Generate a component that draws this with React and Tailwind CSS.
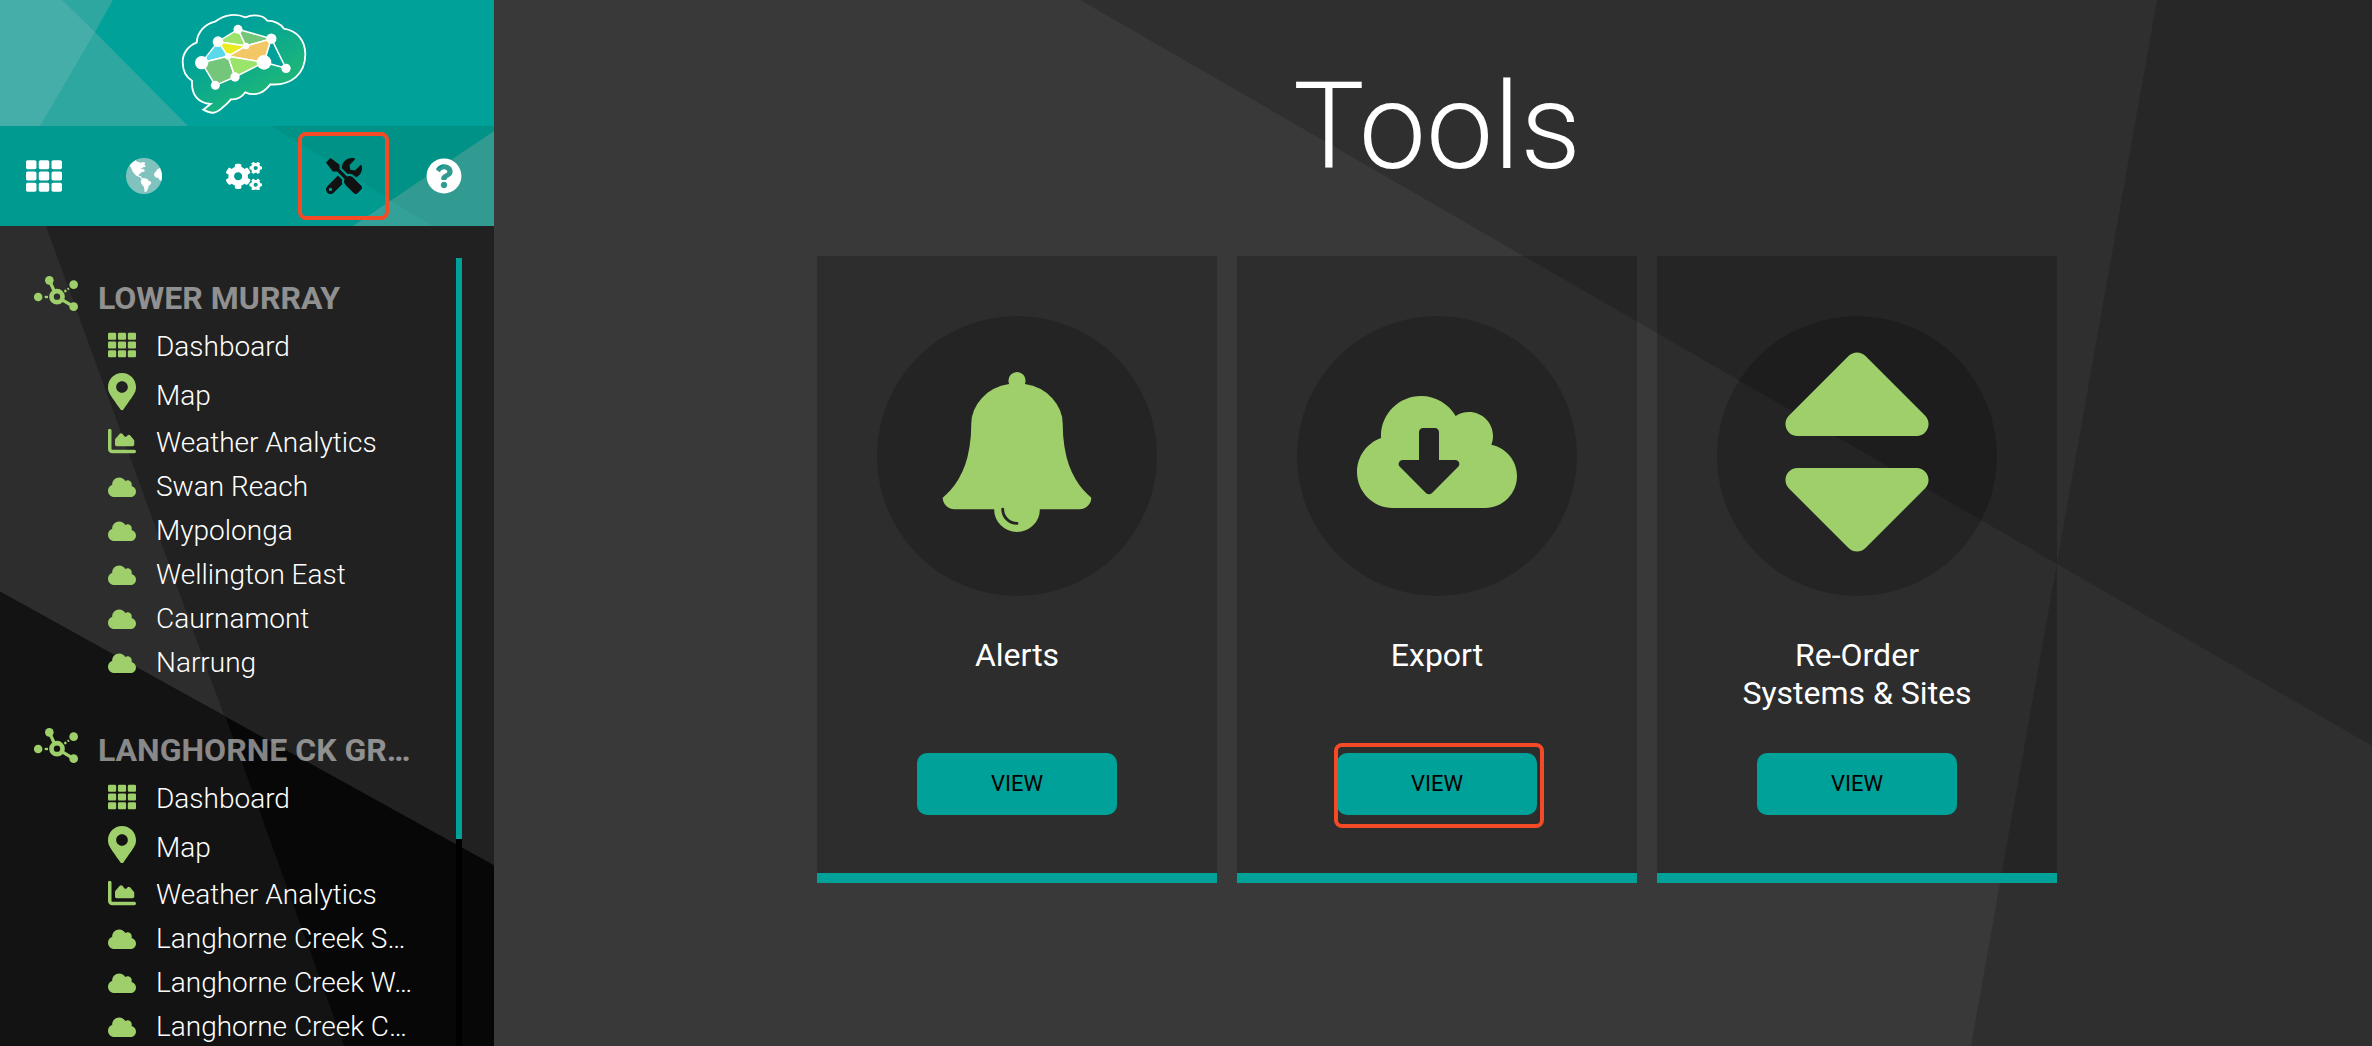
import React from "react";
import {
  FaTh,
  FaCogs,
  FaTools,
  FaQuestionCircle,
  FaMapMarkerAlt,
  FaCloud,
  FaCloudDownloadAlt,
  FaSort,
} from "react-icons/fa";
import { FaChartArea } from "react-icons/fa6";

function BrainLogo() {
  return (
    <svg viewBox="90 30 385 320" className="h-[106.67px] w-[128.33px]">
      <defs>
        <linearGradient id="brain" x1="0.2" y1="0.15" x2="0.7" y2="0.75">
          <stop offset="0.2" stopColor="#00a199" />
          <stop offset="1" stopColor="#1bb57b" />
        </linearGradient>
      </defs>
      <path
        d="M140 128C115 137 98 160 98 185C98 212 110 232 126 242C124 284 142 308 182 312L160 329C185 342 195 342 215 325C225 317 235 308 243 298C262 300 275 292 286 277C315 290 342 278 361 253C425 258 466 220 466 163C466 120 440 92 402 86C393 72 372 62 352 62C340 45 310 42 286 52C260 40 225 42 197 64C165 72 142 95 140 128Z"
        fill="url(#brain)"
        stroke="#fff"
        strokeWidth="5.5"
      />
      <g stroke="#fff" strokeWidth="4.5" strokeLinejoin="round">
        <path d="M264 88L204 125L288 138Z" fill="#9be36a" />
        <path d="M264 88L288 138L364 116Z" fill="#73c67a" />
        <path d="M204 125L288 138L234 169Z" fill="#e8ec20" />
        <path d="M204 125L155 188L234 169Z" fill="#5ad9ec" />
        <path d="M234 169L288 138L364 116L342 187Z" fill="#f4c766" />
        <path d="M155 188L234 169L255 231L196 256Z" fill="#73c67a" />
        <path d="M234 169L255 231L342 187Z" fill="#9be36a" />
        <path d="M364 116L342 187L408 205Z" fill="#00a199" />
      </g>
      <g fill="#fff">
        <circle cx="264" cy="88" r="13.5" />
        <circle cx="204" cy="125" r="16" />
        <circle cx="155" cy="188" r="20" />
        <circle cx="234" cy="169" r="10" />
        <circle cx="288" cy="138" r="10" />
        <circle cx="364" cy="116" r="15.5" />
        <circle cx="342" cy="187" r="22" />
        <circle cx="408" cy="205" r="14" />
        <circle cx="255" cy="231" r="14" />
        <circle cx="196" cy="256" r="13.5" />
      </g>
    </svg>
  );
}

function NetworkIcon() {
  return (
    <svg viewBox="0 0 132 105" className="mb-[9px] h-[35px] w-11 shrink-0 text-[#9fcf6a]">
      <g stroke="currentColor" strokeWidth="10" fill="none">
        <path d="M46 13L62 48" />
        <path d="M82 70L119 92" />
        <path d="M32 63H42" strokeWidth="7" />
        <path d="M91 47L97 43M101 40L105 37" strokeWidth="7" />
        <circle cx="69" cy="62" r="16.5" strokeWidth="14" />
      </g>
      <g fill="currentColor">
        <circle cx="12.5" cy="63" r="12.8" />
        <circle cx="46" cy="13" r="13" />
        <circle cx="119" cy="26" r="13" />
        <circle cx="119" cy="92" r="13" />
      </g>
    </svg>
  );
}

function GlobeIcon() {
  return (
    <svg viewBox="12 13 108 108" className="size-9">
      <circle cx="66" cy="67" r="54" fill="#80c3be" />
      <path
        d="M23 35C28 29 34 24 41 20L46 25L51 24L55 28L62 25L70 27L67 33L71 37L70 40L64 41L59 43L56 46L62 45L68 49L67 54L60 55L56 58L52 62L49 66L56 67L60 73L68 74L76 76L80 81L87 84L87 90L80 97L78 105L73 114L68 115L66 100L59 92L56 84L59 76L54 71L43 66L37 60L31 52L28 44Z"
        fill="#fff"
      />
      <path d="M114 43L106 47L101 54L96 60L97 67L103 72L110 73L112 79L118 82A54 54 0 0 0 114 43Z" fill="#fff" />
    </svg>
  );
}

function BellIcon() {
  return (
    <svg viewBox="0 0 1792 1792" className="size-40" fill="currentColor">
      <path d="M912 1696q0-16-16-16-59 0-101.500-42.500t-42.500-101.500q0-16-16-16t-16 16q0 73 51.500 124.500t124.500 51.500q16 0 16-16zm816-288q0 52-38 90t-90 38h-448q0 106-75 181t-181 75-181-75-75-181h-448q-52 0-90-38t-38-90q50-42 91-88t85-119.500 74.500-158.500 50-206 19.500-260q0-152 117-282.500t307-158.500q-8-19-8-39 0-40 28-68t68-28 68 28 28 68q0 20-8 39 190 28 307 158.500t117 282.500q0 139 19.500 260t50 206 74.500 158.500 85 119.500 91 88z" />
    </svg>
  );
}

const common = [
  { label: "Dashboard", row: "h-12", icon: <FaTh className="mb-1 size-7" /> },
  { label: "Map", row: "h-[50px]", icon: <FaMapMarkerAlt className="mb-2 h-[37.33px] w-7" /> },
  { label: "Weather Analytics", row: "h-11", icon: <FaChartArea className="mb-1 size-7" /> },
];

const groups = [
  {
    name: "LOWER MURRAY",
    sites: ["Swan Reach", "Mypolonga", "Wellington East", "Caurnamont", "Narrung"],
  },
  {
    name: "LANGHORNE CK GR…",
    sites: ["Langhorne Creek S…", "Langhorne Creek W…", "Langhorne Creek C…"],
  },
];

function Item({ label, row, icon }) {
  return (
    <li className={`flex items-center gap-5 pl-[108px] ${row}`}>
      <span className="text-[#9fcf6a]">{icon}</span>
      <span className="text-[28px] leading-[34px] font-light whitespace-nowrap text-white">{label}</span>
    </li>
  );
}

function Group({ name, sites }) {
  return (
    <section>
      <div className="flex h-[50px] items-center gap-5 pl-[34px]">
        <NetworkIcon />
        <h2 className="text-[32px] leading-[38px] font-bold whitespace-nowrap text-white/50">{name}</h2>
      </div>
      <ul>
        {common.map((c) => (
          <Item key={c.label} {...c} />
        ))}
        {sites.map((s) => (
          <Item key={s} label={s} row="h-11" icon={<FaCloud className="h-[22.4px] w-7" />} />
        ))}
      </ul>
    </section>
  );
}

function Sidebar() {
  return (
    <aside className="flex h-[1046px] w-[494px] shrink-0 flex-col overflow-hidden">
      <div className="relative h-[126px] shrink-0 bg-[#00a199]">
        <svg viewBox="0 0 494 126" className="absolute inset-0 h-full w-full">
          <path d="M0 0H113L95 32L188 126H0Z" fill="#2da79f" />
          <path d="M0 0H62L95 32L40 126H0Z" fill="#46aea8" />
        </svg>
        <div className="relative pt-[10px] pl-[180px]">
          <BrainLogo />
        </div>
      </div>
      <nav className="relative h-[100px] shrink-0 bg-[#009a90]">
        <svg viewBox="0 126 494 100" className="absolute inset-0 h-full w-full">
          <path d="M272 126H494V226H432Z" fill="#009187" />
          <path d="M353 226L494 131V226Z" fill="#319b91" />
          <path d="M353 226L391 200.400L432 226Z" fill="#34a198" />
        </svg>
        <div className="relative flex h-full items-center gap-16 pl-[26px] text-white">
          <FaTh className="size-9" />
          <GlobeIcon />
          <FaCogs className="h-[28.8px] w-9" />
          <span className="relative">
            <FaTools className="size-9 text-[#111]" />
            <span className="absolute -top-[26px] -left-7 h-[88px] w-[91px] rounded-lg border-4 border-[#f44a25]" />
          </span>
          <FaQuestionCircle className="size-9" />
        </div>
      </nav>
      <div className="relative h-[820px] bg-[#212121]">
        <svg viewBox="0 226 494 820" className="absolute inset-0 h-full w-full">
          <path d="M0 226H46L344.300 1046H0Z" fill="#2d2d2d" />
          <path d="M0 591.700L494 865.300V1046H0Z" fill="#070707" />
          <path d="M0 591.700L225.500 716.500L344.300 1046H0Z" fill="#131313" />
        </svg>
        <div className="relative flex h-full">
          <div className="flex w-[456px] flex-col gap-[40.4px] overflow-hidden pt-[47px]">
            {groups.map((g) => (
              <Group key={g.name} {...g} />
            ))}
          </div>
          <div className="mt-8 h-[788px] w-1.5 bg-black">
            <div className="h-[581px] bg-[#00a199]" />
          </div>
        </div>
      </div>
    </aside>
  );
}

function Card({ icon, label, highlighted }) {
  return (
    <article className="flex h-[627px] w-[400px] flex-col items-center border-b-10 border-[#00a199] bg-black/20 pt-[60px]">
      <div className="flex size-70 items-center justify-center rounded-full bg-black/20 pb-2 text-[#9fcf6a]">
        {icon}
      </div>
      <h3 className="mt-10 h-[117px] text-center text-[32px] leading-[38px] whitespace-pre-line text-white">
        {label}
      </h3>
      <div className="relative">
        <button className="h-[62px] w-[200px] rounded-[10px] bg-[#00a199] pb-0.5 text-[22px] text-black">VIEW</button>
        {highlighted && (
          <span className="absolute -top-[10px] -left-[3px] h-[85px] w-[210px] rounded-lg border-4 border-[#f44a25]" />
        )}
      </div>
    </article>
  );
}

export default function App() {
  return (
    <div className="flex h-[1046px] w-[2372px] overflow-hidden bg-[#393939] font-['Roboto',sans-serif]">
      <Sidebar />
      <main className="relative flex-1">
        <svg viewBox="494 0 1878 1046" className="absolute inset-0 h-full w-full">
          <path d="M1080 0H2372V746Z" fill="#000" fillOpacity="0.160" />
          <path d="M2157 0H2372V1046H1971Z" fill="#000" fillOpacity="0.160" />
        </svg>
        <div className="relative flex flex-col items-center pl-2">
          <h1 className="mt-[57px] text-[120px] leading-[140px] font-light text-white">Tools</h1>
          <div className="mt-[59px] flex gap-5">
            <Card icon={<BellIcon />} label="Alerts" />
            <Card icon={<FaCloudDownloadAlt className="h-32 w-40" />} label="Export" highlighted />
            <Card icon={<FaSort className="h-64 w-40" />} label={"Re-Order\nSystems & Sites"} />
          </div>
        </div>
      </main>
    </div>
  );
}
